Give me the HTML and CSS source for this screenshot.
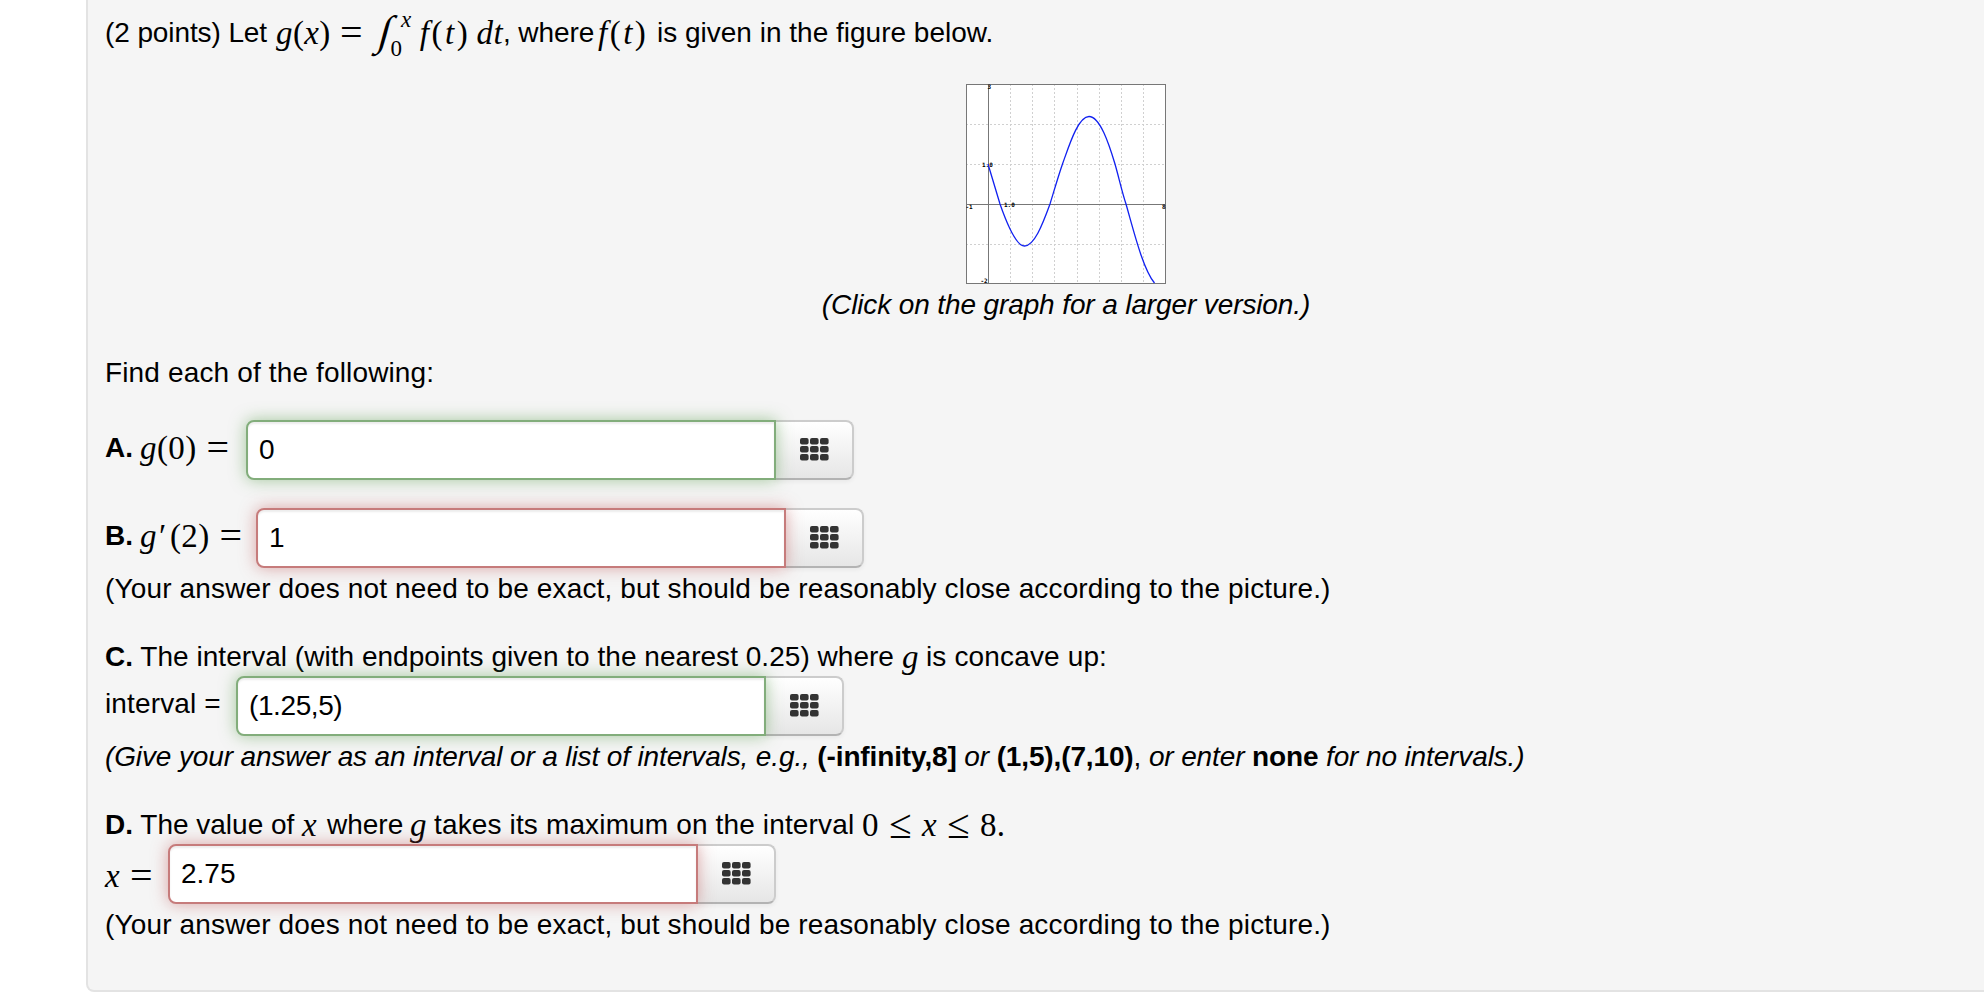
FILE: index.html
```
<!DOCTYPE html>
<html lang="en">
<head>
    <meta charset="UTF-8">
    <meta name="viewport" content="width=device-width, initial-scale=1.0">
    <title>Homework Problem</title>
    <link rel="stylesheet" href="styles.css">
</head>
<body>
    <svg class="sprite">
        <symbol id="keypad" viewBox="0 0 29 23">
            <g fill="#333">
                <rect x="0" y="0" width="8.6" height="6.4" rx="2"/>
                <rect x="10" y="0" width="8.6" height="6.4" rx="2"/>
                <rect x="20" y="0" width="8.6" height="6.4" rx="2"/>
                <rect x="0" y="8" width="8.6" height="6.4" rx="2"/>
                <rect x="10" y="8" width="8.6" height="6.4" rx="2"/>
                <rect x="20" y="8" width="8.6" height="6.4" rx="2"/>
                <rect x="0" y="16" width="8.6" height="6.4" rx="2"/>
                <rect x="10" y="16" width="8.6" height="6.4" rx="2"/>
                <rect x="20" y="16" width="8.6" height="6.4" rx="2"/>
            </g>
        </symbol>
    </svg>

    <div class="problem">
        <div class="line statement">
            <span class="intro">(2 points) Let</span>
            <span class="math integral-eq"><span class="lhs"><i>g</i>(<i>x</i>)</span><span class="eq">=</span><span class="int">∫</span><span class="limits"><i class="upper">x</i><span class="lower">0</span></span><span class="ft"><i>f</i>(<i>t</i>)</span><span><i>dt</i></span></span>
            <span class="where">, where</span>
            <span class="math ft-inline"><i>f</i>(<i>t</i>)</span>
            <span>is given in the figure below.</span>
        </div>

        <div class="figure">
            <svg class="graph" viewBox="0 0 200 200">
                <rect x="0.5" y="0.5" width="199" height="199" fill="#fff"/>
                <path class="grid" d="M44.5 0V200M66.5 0V200M88.5 0V200M111.5 0V200M133.5 0V200M155.5 0V200M177.5 0V200M0 40.5H200M0 80.5H200M0 160.5H200"/>
                <path class="axes" d="M22.5 0V200M0 120.5H200"/>
                <rect class="axes" x="0.5" y="0.5" width="199" height="199"/>
                <path class="curve" d="M22 80C26 93 30 107 34 120C41 140 50 162 58.5 162C68 162 76 142 84 120C88 107 92 93 96.5 80C103 62 112 32.5 123 32.5C134 32.5 143 60 149 80C153 94 156 108 160 120C168 148 177 185 188.5 199"/>
                <text x="21.5" y="5">3</text>
                <text x="16" y="82.5">1.0</text>
                <text x="38" y="122.5">1.0</text>
                <text x="-0.5" y="125">-1</text>
                <text x="196" y="125">8</text>
                <text x="14.5" y="198.5">-2</text>
            </svg>
            <div class="line caption">(Click on the graph for a larger version.)</div>
        </div>

        <div class="line gap">Find each of the following:</div>

        <div class="answer gap">
            <div class="label label-a"><b>A.</b><span class="math"><i>g</i>(0)<span class="eq">=</span></span></div>
            <input class="correct" type="text" value="0">
            <button><svg><use href="#keypad"/></svg></button>
        </div>

        <div class="answer gap">
            <div class="label label-b"><b>B.</b><span class="math"><i>g</i><i class="prime">′</i>(2)<span class="eq">=</span></span></div>
            <input class="incorrect" type="text" value="1">
            <button><svg><use href="#keypad"/></svg></button>
        </div>
        <div class="line">(Your answer does not need to be exact, but should be reasonably close according to the picture.)</div>

        <div class="line gap">
            <span class="part-c"><b>C.</b> The interval (with endpoints given to the nearest 0.25) where</span>
            <span class="math var-g"><i>g</i></span>
            <span>is concave up:</span>
        </div>
        <div class="answer">
            <div class="label label-c">interval =</div>
            <input class="correct interval" type="text" value="(1.25,5)">
            <button><svg><use href="#keypad"/></svg></button>
        </div>
        <div class="line"><p class="hint"><i>(Give your answer as an interval or a list of intervals, e.g.,</i> <b>(-infinity,8]</b> <i>or</i> <b>(1,5),(7,10)</b>, <i>or enter</i> <b>none</b> <i>for no intervals.)</i></p></div>

        <div class="line gap">
            <span class="part-d"><b>D.</b> The value of</span>
            <span class="math var-x"><i>x</i></span>
            <span class="where-d">where</span>
            <span class="math var-g"><i>g</i></span>
            <span class="takes">takes its maximum on the interval</span>
            <span class="math range">0<span class="le">≤</span><i>x</i><span class="le">≤</span>8.</span>
        </div>
        <div class="answer">
            <div class="label label-d"><span class="math"><i>x</i><span class="eq">=</span></span></div>
            <input class="incorrect" type="text" value="2.75">
            <button><svg><use href="#keypad"/></svg></button>
        </div>
        <div class="line">(Your answer does not need to be exact, but should be reasonably close according to the picture.)</div>
    </div>
</body>
</html>
```
FILE: styles.css
```
body {
    font-family: "Liberation Sans", Arial, sans-serif;
    font-size: 28px;
    line-height: 42px;
    letter-spacing: 0.145px;
    color: #000;
    background-color: #fff;
    margin: 0;
    overflow: hidden;
}

.sprite {
    display: none;
}

.problem {
    box-sizing: border-box;
    width: 1959px;
    height: 992px;
    margin-left: 86px;
    padding: 12px 16px 46px 17px;
    background-color: #f5f5f5;
    border: 2px solid #e3e3e3;
    border-top: none;
    border-radius: 0 0 8px 8px;
}

.line {
    display: flex;
    align-items: baseline;
    height: 40px;
    white-space: nowrap;
}

.statement {
    letter-spacing: 0;
}

.gap {
    margin-top: 28px;
}

/* math */
.math {
    display: inline-flex;
    align-items: baseline;
    font-family: "Liberation Serif", "Times New Roman", serif;
    font-size: 33px;
    line-height: 0;
    letter-spacing: 0.4px;
    margin-bottom: -2px;
    transform: translateY(2px);
}

.eq {
    width: 22px;
    font-size: 40px;
    margin-left: 10px;
    transform: translateY(2px);
}

.intro {
    width: 171px;
    letter-spacing: -0.1px;
}

.integral-eq {
    width: 227px;
}

.lhs {
    width: 54px;
}

.int {
    font-size: 42px;
    width: 15px;
    margin-left: 18px;
    transform: translateY(1px) skewX(-15deg);
}

.limits {
    width: 25px;
    display: flex;
    font-size: 23px;
}

.upper {
    transform: translate(6px, -17px);
}

.lower {
    transform: translate(-15px, 12px);
}

.ft {
    width: 57px;
    letter-spacing: 2.5px;
}

.where {
    width: 95px;
    letter-spacing: -0.1px;
}

.ft-inline {
    width: 59px;
    letter-spacing: 2.5px;
}

.prime {
    width: 13px;
}

.var-g {
    width: 24px;
}

.var-x {
    width: 25px;
}

.part-c {
    width: 797px;
    letter-spacing: 0.03px;
}

.part-d {
    width: 197px;
    letter-spacing: 0;
}

.where-d {
    width: 83px;
    letter-spacing: 0;
}

.takes {
    width: 428px;
}

.le {
    font-size: 41px;
    width: 23px;
    margin: 0 10px;
    transform: translateY(2px);
}

/* graph */
.figure {
    margin-top: 32px;
    text-align: center;
}

.graph {
    display: block;
    width: 200px;
    height: 200px;
    margin: 0 auto;
}

.graph text {
    font: bold 6px "DejaVu Sans Mono", monospace;
    letter-spacing: 0;
}

.grid {
    stroke: #d0d0d0;
    stroke-dasharray: 2 2;
    fill: none;
}

.axes {
    stroke: #777;
    fill: none;
}

.curve {
    stroke: #1020f0;
    stroke-width: 1.3;
    fill: none;
}

.caption {
    justify-content: center;
    font-style: italic;
    letter-spacing: -0.12px;
}

/* answers */
.answer {
    display: flex;
    align-items: center;
    height: 60px;
}

.label {
    display: flex;
    align-items: baseline;
    margin-bottom: 5px;
    white-space: nowrap;
}

.label b {
    width: 35px;
}

.label-a {
    width: 141px;
}

.label-b {
    width: 151px;
}

.label-c {
    width: 131px;
}

.label-d {
    width: 63px;
}

input {
    position: relative;
    z-index: 1;
    box-sizing: border-box;
    width: 530px;
    height: 60px;
    padding: 0 11px;
    font: inherit;
    color: #000;
    background-color: #fff;
    border: 2px solid;
    border-radius: 8px 0 0 8px;
    outline: none;
}

.interval {
    letter-spacing: -0.4px;
}

.correct {
    border-color: #82ad7b;
    box-shadow: inset 0 2px 2px rgba(0,0,0,0.075), 0 0 16px rgba(81,153,68,0.5);
}

.incorrect {
    border-color: #c67b7b;
    box-shadow: inset 0 2px 2px rgba(0,0,0,0.075), 0 0 16px rgba(191,84,84,0.5);
}

button {
    display: flex;
    align-items: center;
    box-sizing: border-box;
    width: 80px;
    height: 60px;
    margin-left: -2px;
    padding: 0 0 0 24px;
    background: linear-gradient(#fff, #e6e6e6);
    border: 2px solid #ccc;
    border-bottom-color: #b3b3b3;
    border-radius: 0 8px 8px 0;
    box-shadow: 0 2px 4px rgba(0,0,0,0.05);
}

button svg {
    width: 29px;
    height: 23px;
    margin-bottom: 2px;
}

.hint {
    margin: 0;
    letter-spacing: -0.13px;
}
```
